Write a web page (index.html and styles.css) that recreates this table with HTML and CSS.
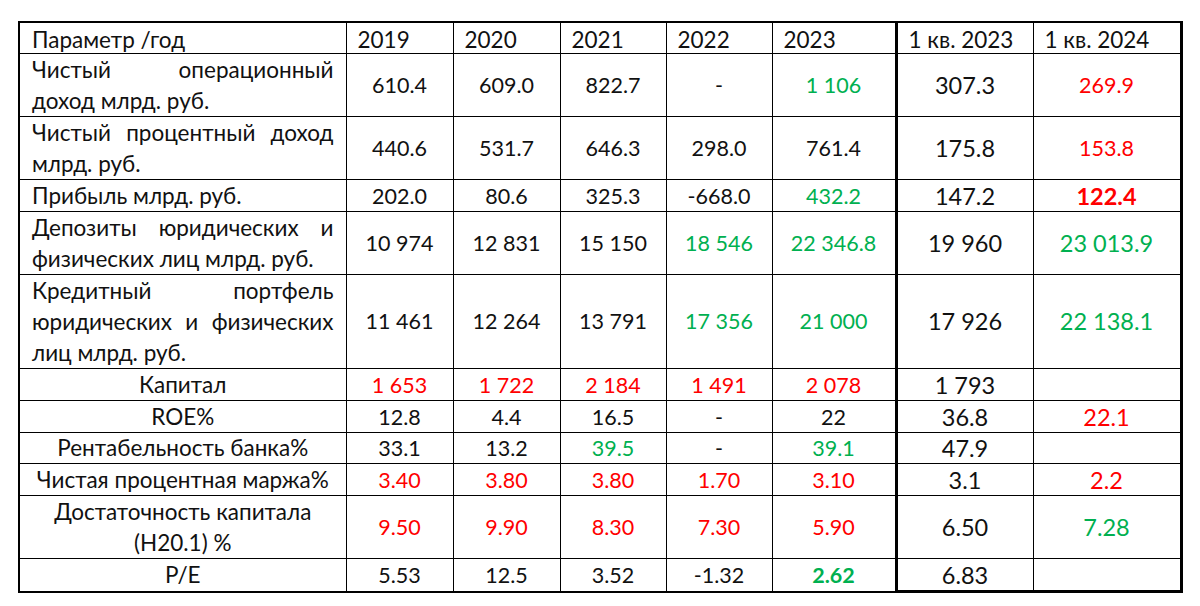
FILE: index.html
```html
<!DOCTYPE html>
<html lang="ru">
<head>
<meta charset="utf-8">
<title>Показатели</title>
<link rel="stylesheet" href="styles.css">
</head>
<body>
<table class="fin">
  <colgroup>
    <col class="c-name"><col class="c-y"><col class="c-y"><col class="c-y2"><col class="c-y2"><col class="c-y3"><col class="c-q1"><col class="c-q2">
  </colgroup>
  <thead>
    <tr class="r-h">
      <th class="name">Параметр /год</th>
      <th>2019</th><th>2020</th><th>2021</th><th>2022</th><th>2023</th>
      <th class="q">1 кв. 2023</th><th class="last">1 кв. 2024</th>
    </tr>
  </thead>
  <tbody>
    <tr class="r-2">
      <td class="name"><span class="jl">Чистый операционный</span><span class="ll">доход млрд. руб.</span></td>
      <td>610.4</td><td>609.0</td><td>822.7</td><td>-</td><td class="g">1 106</td>
      <td class="q big">307.3</td><td class="last r">269.9</td>
    </tr>
    <tr class="r-2">
      <td class="name"><span class="jl">Чистый процентный доход</span><span class="ll">млрд. руб.</span></td>
      <td>440.6</td><td>531.7</td><td>646.3</td><td>298.0</td><td>761.4</td>
      <td class="q big">175.8</td><td class="last r">153.8</td>
    </tr>
    <tr class="r-1 soft">
      <td class="name">Прибыль млрд. руб.</td>
      <td>202.0</td><td>80.6</td><td>325.3</td><td>-668.0</td><td class="g">432.2</td>
      <td class="q big">147.2</td><td class="last r big b">122.4</td>
    </tr>
    <tr class="r-2b soft">
      <td class="name"><span class="jl">Депозиты юридических и</span><span class="ll">физических лиц млрд. руб.</span></td>
      <td>10 974</td><td>12 831</td><td>15 150</td><td class="g">18 546</td><td class="g">22 346.8</td>
      <td class="q big">19 960</td><td class="last g big">23 013.9</td>
    </tr>
    <tr class="r-3">
      <td class="name"><span class="jl">Кредитный портфель</span><span class="jl">юридических и физических</span><span class="ll">лиц млрд. руб.</span></td>
      <td>11 461</td><td>12 264</td><td>13 791</td><td class="g">17 356</td><td class="g">21 000</td>
      <td class="q big">17 926</td><td class="last g big">22 138.1</td>
    </tr>
    <tr class="r-1">
      <td class="name center">Капитал</td>
      <td class="r">1 653</td><td class="r">1 722</td><td class="r">2 184</td><td class="r">1 491</td><td class="r">2 078</td>
      <td class="q big">1 793</td><td class="last"></td>
    </tr>
    <tr class="r-1 soft">
      <td class="name center">ROE%</td>
      <td>12.8</td><td>4.4</td><td>16.5</td><td>-</td><td>22</td>
      <td class="q big">36.8</td><td class="last r big">22.1</td>
    </tr>
    <tr class="r-1s soft">
      <td class="name center">Рентабельность банка%</td>
      <td>33.1</td><td>13.2</td><td class="g">39.5</td><td>-</td><td class="g">39.1</td>
      <td class="q big">47.9</td><td class="last"></td>
    </tr>
    <tr class="r-1">
      <td class="name center">Чистая процентная маржа%</td>
      <td class="r">3.40</td><td class="r">3.80</td><td class="r">3.80</td><td class="r">1.70</td><td class="r">3.10</td>
      <td class="q big">3.1</td><td class="last r big">2.2</td>
    </tr>
    <tr class="r-2c">
      <td class="name center">Достаточность капитала<br>(Н20.1) %</td>
      <td class="r">9.50</td><td class="r">9.90</td><td class="r">8.30</td><td class="r">7.30</td><td class="r">5.90</td>
      <td class="q big">6.50</td><td class="last g big">7.28</td>
    </tr>
    <tr class="r-1e end">
      <td class="name center">P/E</td>
      <td>5.53</td><td>12.5</td><td>3.52</td><td>-1.32</td><td class="g b">2.62</td>
      <td class="q big">6.83</td><td class="last"></td>
    </tr>
  </tbody>
</table>
</body>
</html>
```

FILE: styles.css
```css
html, body {
  margin: 0;
  padding: 0;
  background: #ffffff;
}

body {
  padding: 21px 0 0 18px;
  font-family: "Lato", "Liberation Sans", sans-serif;
  color: #111111;
}

.fin {
  border-collapse: collapse;
  table-layout: fixed;
  width: 1162px;
  border: 2px solid #000;
  font-size: 21.5px;
}

.c-name { width: 327px; }
.c-y { width: 107px; }
.c-y2 { width: 106px; }
.c-y3 { width: 124px; }
.c-q1 { width: 137px; }
.c-q2 { width: 148px; }

.fin th,
.fin td {
  border: 1px solid #000;
  padding: 0;
  vertical-align: middle;
  text-align: center;
  line-height: 31px;
  white-space: nowrap;
}

.fin th {
  font-weight: normal;
  text-align: left;
  padding-left: 11px;
  font-size: 22.5px;
  padding-top: 3px;
}

.fin .name {
  text-align: left;
  padding-left: 12px;
  padding-right: 12px;
  white-space: normal;
  font-size: 22.5px;
}

.fin .name.center {
  text-align: center;
  padding-left: 2px;
  padding-right: 2px;
}

.jl {
  display: block;
  text-align: justify;
  text-align-last: justify;
}

.ll {
  display: block;
  text-align: left;
}

.r-h th { height: 27px; line-height: 26px; }
.r-1 td { height: 31px; line-height: 26px; }
.r-1s td { height: 30px; line-height: 26px; }
.r-1e td { height: 31px; line-height: 26px; }
.r-2 td { height: 62px; }
.r-2b td { height: 59px; }
.r-2c td { height: 62px; }
.r-3 td { height: 93px; }

.soft td { border-top-color: #808080; }

.fin .q { border-left: 3px solid #000; }
.fin .last { border-right: 3px solid #000; }
.end .q, .end .last { border-bottom: 3px solid #000; }

.big { font-size: 23.5px; }
.g { color: #00b050; }
.r { color: #ff0000; }
.b { font-weight: bold; }
```
